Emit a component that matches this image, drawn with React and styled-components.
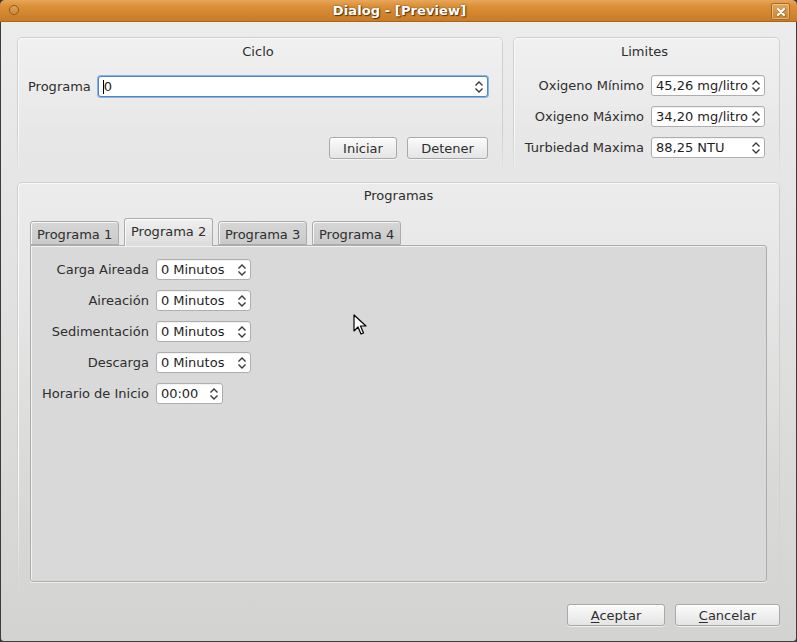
import React from "react";
import styled, { createGlobalStyle } from "styled-components";

const Global = createGlobalStyle`
  html, body { margin: 0; padding: 0; background: #3a3a3a; }
  body { font-family: "DejaVu Sans", "Liberation Sans", sans-serif; font-size: 13px; color: #2e2e2e; }
  * { box-sizing: border-box; }
`;

const Window = styled.div`
  position: relative;
  width: 797px;
  height: 642px;
  display: flex;
  flex-direction: column;
  background: #3c3c3c;
  border-radius: 5px 5px 4px 4px;
  overflow: hidden;
`;

const TitleBar = styled.div`
  height: 22px;
  flex: none;
  position: relative;
  display: flex;
  align-items: center;
  justify-content: center;
  background: linear-gradient(#e7a65a 0%, #db8f37 30%, #c97c26 100%);
  border-bottom: 1px solid #a86616;
`;

const Title = styled.div`
  font-weight: bold;
  font-size: 13px;
  color: #ffffff;
  text-shadow: 1px 1px 1px #5a3306, 0 0 2px #7a4a10;
  letter-spacing: 0.1px;
  margin-left: 2px;
`;

const MenuDot = styled.div`
  position: absolute;
  left: 9px;
  top: 5px;
  width: 10px;
  height: 10px;
  border-radius: 50%;
  border: 1px solid #8b5a1c;
  background: linear-gradient(#e0a15a, #cf8a3a);
`;

const CloseBtn = styled.div`
  position: absolute;
  right: 7px;
  top: 3px;
  width: 19px;
  height: 17px;
  border: 1px solid #a46a2a;
  border-radius: 2px;
  background: linear-gradient(#e3a661, #c98330);
  box-shadow: inset 0 0 0 1px rgba(255, 220, 170, 0.5);
  display: flex;
  align-items: center;
  justify-content: center;
`;

const Body = styled.div`
  flex: 1;
  margin: 0 1px 1px 1px;
  border-radius: 0 0 3px 3px;
  background: linear-gradient(#ececec, #d3d3d2);
  padding: 15px 16px 0 16px;
  display: flex;
  flex-direction: column;
`;

const TopRow = styled.div`
  display: flex;
  gap: 10px;
  height: 138px;
  flex: none;
`;

const Group = styled.div`
  position: relative;
  width: ${(p) => p.$w || "auto"};
  flex: ${(p) => (p.$w || p.$h ? "none" : "1")};
  height: ${(p) => p.$h || "auto"};
  margin-top: ${(p) => p.$mt || "0"};
  padding: ${(p) => p.$pad || "7px 15px 16px 11px"};
  display: flex;
  flex-direction: column;
  background: linear-gradient(rgba(255,255,255,0.25), rgba(255,255,255,0) 70%);
  border-radius: 5px 5px 0 0;
  &::before {
    content: "";
    position: absolute;
    inset: 0;
    border: 1px solid #cfcfcf;
    border-bottom: none;
    border-radius: 5px 5px 0 0;
    box-shadow: inset 1px 1px 0 #fafafa;
    -webkit-mask-image: linear-gradient(#000 70%, transparent 100%);
    mask-image: linear-gradient(#000 70%, transparent 100%);
    pointer-events: none;
  }
`;

const GroupTitle = styled.div`
  text-align: center;
  line-height: 16px;
  height: 16px;
  color: #2e2e2e;
`;

const FormRow = styled.div`
  display: flex;
  align-items: center;
  gap: 7px;
  margin-top: ${(p) => p.$mt || "0"};
`;

const Label = styled.span`
  white-space: nowrap;
  color: #2e2e2e;
`;

const Spacer = styled.div`
  flex: 1;
`;

const ButtonRow = styled.div`
  display: flex;
  justify-content: flex-end;
  gap: 10px;
`;

const Button = styled.button`
  font-family: inherit;
  font-size: 13px;
  color: #2e2e2e;
  height: 22px;
  width: ${(p) => p.$w};
  padding: 0;
  border: 1px solid #a9a9a9;
  border-radius: 3px;
  background: linear-gradient(#fbfbfb, #e4e4e4);
  box-shadow: inset 0 1px 0 #ffffff, 0 1px 0 rgba(255,255,255,0.6);
  u { text-decoration: underline; text-underline-offset: 2px; }
`;

const Spin = styled.div`
  position: relative;
  width: ${(p) => p.$w};
  flex: ${(p) => (p.$grow ? "1" : "none")};
  height: 21px;
  background: #ffffff;
  border: 1px solid ${(p) => (p.$focus ? "#4e86cc" : "#aeaeae")};
  box-shadow: ${(p) => (p.$focus ? "0 0 0 1px #8ab1e0" : "inset 0 1px 1px rgba(0,0,0,0.06)")};
  border-radius: 3px;
  display: flex;
  align-items: center;
  padding: 0 18px 0 4px;
  color: #1e1e1e;
  white-space: nowrap;
`;

const Caret = styled.span`
  display: inline-block;
  width: 1px;
  height: 14px;
  background: #000;
`;

const ArrowBox = styled.span`
  position: absolute;
  right: 3px;
  top: 50%;
  transform: translateY(-50%);
  display: flex;
`;

const SpinArrows = () => (
  <ArrowBox>
    <svg width="10" height="15" viewBox="0 0 10 15">
      <path d="M1.5 6 L5 2.5 L8.5 6" fill="none" stroke="#3a3a3a" strokeWidth="1.4" />
      <path d="M1.5 9 L5 12.5 L8.5 9" fill="none" stroke="#3a3a3a" strokeWidth="1.4" />
    </svg>
  </ArrowBox>
);

const LimitsGrid = styled.div`
  display: grid;
  grid-template-columns: auto 114px;
  column-gap: 7px;
  row-gap: 10px;
  margin-top: 15px;
  justify-content: end;
  align-items: center;
  & > span { text-align: right; }
`;

const TabBar = styled.div`
  display: flex;
  align-items: flex-end;
  gap: 5px;
  margin-top: 14px;
  height: 27px;
  position: relative;
  z-index: 1;
`;

const Tab = styled.div`
  width: 89px;
  height: ${(p) => (p.$active ? "28px" : "24px")};
  padding: 5px 0 0 6px;
  border: 1px solid #acacac;
  border-bottom: ${(p) => (p.$active ? "none" : "1px solid #acacac")};
  border-radius: 3px 3px 0 0;
  margin-bottom: ${(p) => (p.$active ? "-1px" : "0")};
  background: ${(p) =>
    p.$active ? "linear-gradient(#f0f0f0, #dcdcdc)" : "linear-gradient(#d6d6d6, #cacaca)"};
  box-shadow: inset 1px 1px 0 rgba(255,255,255,0.8);
  white-space: nowrap;
  color: #2e2e2e;
  line-height: 16px;
`;

const Pane = styled.div`
  flex: 1;
  border: 1px solid #acacac;
  border-radius: 0 3px 3px 3px;
  background: #d9d9d9;
  box-shadow: inset 1px 1px 0 #f2f2f2, 0 1px 0 #f0f0f0;
  padding: 13px 11px;
  display: grid;
  grid-template-columns: auto 1fr;
  grid-auto-rows: 21px;
  column-gap: 7px;
  row-gap: 10px;
  align-content: start;
  align-items: center;
  & > span { text-align: right; }
`;

const Cell = styled.div`
  display: flex;
`;

const BottomBar = styled.div`
  display: flex;
  justify-content: flex-end;
  gap: 10px;
  margin-top: 7px;
`;

const Cursor = styled.svg`
  position: absolute;
  left: 353px;
  top: 314px;
`;

export default function App() {
  const rows = [
    ["Carga Aireada", "0 Minutos", "95px"],
    ["Aireación", "0 Minutos", "95px"],
    ["Sedimentación", "0 Minutos", "95px"],
    ["Descarga", "0 Minutos", "95px"],
    ["Horario de Inicio", "00:00", "67px"],
  ];
  return (
    <>
      <Global />
      <Window>
        <TitleBar>
          <MenuDot />
          <Title>Dialog - [Preview]</Title>
          <CloseBtn>
            <svg width="10" height="10" viewBox="0 0 10 10">
              <path d="M2 2 L8 8 M8 2 L2 8" stroke="#5a3306" strokeWidth="3" strokeLinecap="round" opacity="0.35" transform="translate(0.5 0.5)" />
              <path d="M2 2 L8 8 M8 2 L2 8" stroke="#ffffff" strokeWidth="2.2" strokeLinecap="round" />
            </svg>
          </CloseBtn>
        </TitleBar>
        <Body>
          <TopRow>
            <Group $w="486px">
              <GroupTitle>Ciclo</GroupTitle>
              <FormRow $mt="16px">
                <Label>Programa</Label>
                <Spin $grow $focus>
                  <Caret />0
                  <SpinArrows />
                </Spin>
              </FormRow>
              <Spacer />
              <ButtonRow>
                <Button $w="68px">Iniciar</Button>
                <Button $w="81px">Detener</Button>
              </ButtonRow>
            </Group>
            <Group>
              <GroupTitle>Limites</GroupTitle>
              <LimitsGrid>
                <Label>Oxigeno Mínimo</Label>
                <Spin>45,26 mg/litro<SpinArrows /></Spin>
                <Label>Oxigeno Máximo</Label>
                <Spin>34,20 mg/litro<SpinArrows /></Spin>
                <Label>Turbiedad Maxima</Label>
                <Spin>88,25 NTU<SpinArrows /></Spin>
              </LimitsGrid>
            </Group>
          </TopRow>
          <Group $h="415px" $mt="7px" $pad="6px 13px 15px 13px">
            <GroupTitle>Programas</GroupTitle>
            <TabBar>
              <Tab>Programa 1</Tab>
              <Tab $active>Programa 2</Tab>
              <Tab>Programa 3</Tab>
              <Tab>Programa 4</Tab>
            </TabBar>
            <Pane>
              {rows.map(([l, v, w]) => (
                <React.Fragment key={l}>
                  <Label>{l}</Label>
                  <Cell>
                    <Spin $w={w}>{v}<SpinArrows /></Spin>
                  </Cell>
                </React.Fragment>
              ))}
            </Pane>
          </Group>
          <BottomBar>
            <Button $w="98px"><u>A</u>ceptar</Button>
            <Button $w="105px"><u>C</u>ancelar</Button>
          </BottomBar>
        </Body>
        <Cursor width="14" height="22" viewBox="0 0 14 22">
          <path d="M1 1 L1 17 L5 13 L8 20 L10.5 19 L7.5 12 L13 12 Z" fill="#ffffff" stroke="#000000" strokeWidth="1.2" strokeLinejoin="round" />
        </Cursor>
      </Window>
    </>
  );
}
